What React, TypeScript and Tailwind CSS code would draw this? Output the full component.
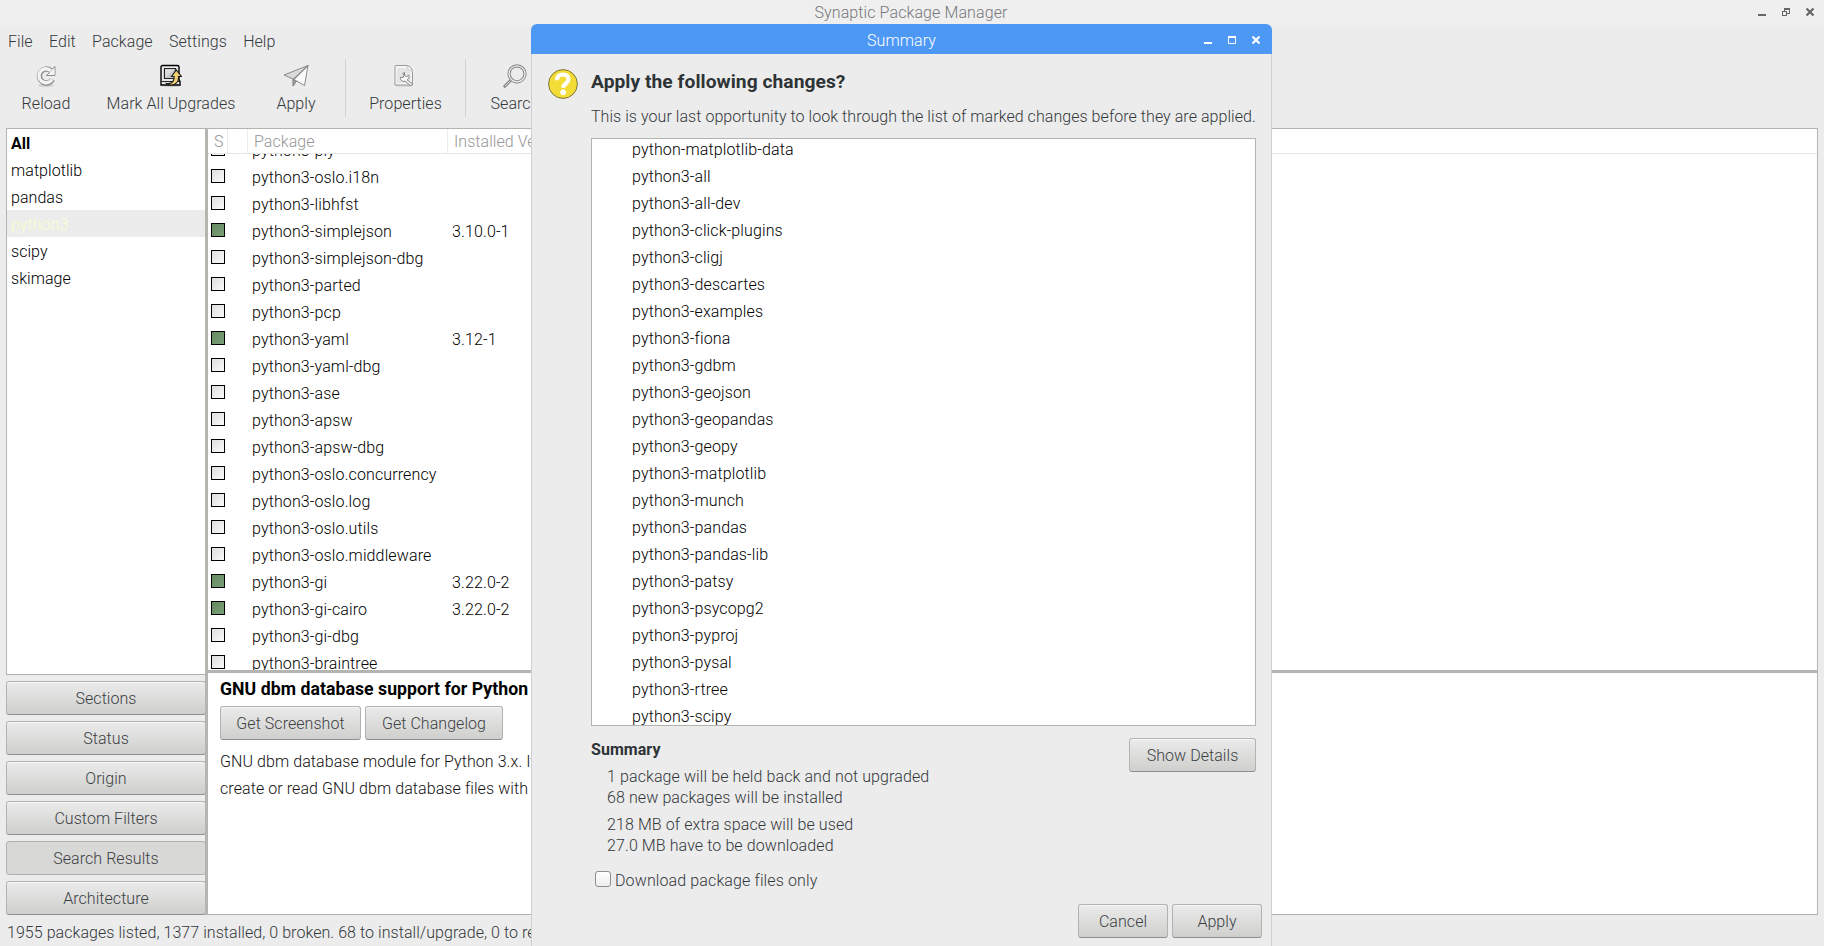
import React from "react";

const sections = ["All", "matplotlib", "pandas", "python3", "scipy", "skimage"];

const packages: { name: string; version?: string }[] = [
  { name: "python3-ply" },
  { name: "python3-oslo.i18n" },
  { name: "python3-libhfst" },
  { name: "python3-simplejson", version: "3.10.0-1" },
  { name: "python3-simplejson-dbg" },
  { name: "python3-parted" },
  { name: "python3-pcp" },
  { name: "python3-yaml", version: "3.12-1" },
  { name: "python3-yaml-dbg" },
  { name: "python3-ase" },
  { name: "python3-apsw" },
  { name: "python3-apsw-dbg" },
  { name: "python3-oslo.concurrency" },
  { name: "python3-oslo.log" },
  { name: "python3-oslo.utils" },
  { name: "python3-oslo.middleware" },
  { name: "python3-gi", version: "3.22.0-2" },
  { name: "python3-gi-cairo", version: "3.22.0-2" },
  { name: "python3-gi-dbg" },
  { name: "python3-braintree" },
];

const marked = [
  "python-matplotlib-data",
  "python3-all",
  "python3-all-dev",
  "python3-click-plugins",
  "python3-cligj",
  "python3-descartes",
  "python3-examples",
  "python3-fiona",
  "python3-gdbm",
  "python3-geojson",
  "python3-geopandas",
  "python3-geopy",
  "python3-matplotlib",
  "python3-munch",
  "python3-pandas",
  "python3-pandas-lib",
  "python3-patsy",
  "python3-psycopg2",
  "python3-pyproj",
  "python3-pysal",
  "python3-rtree",
  "python3-scipy",
];

const filters = ["Sections", "Status", "Origin", "Custom Filters", "Search Results", "Architecture"];

function Button({ children, className = "", pressed = false }: { children: React.ReactNode; className?: string; pressed?: boolean }) {
  const skin = pressed
    ? "border-[#b0b0ae] bg-[#d8d8d7]"
    : "border-[#b2b2b0] border-b-[#8e8e8c] bg-linear-to-b from-[#ebebeb] to-[#cfcfcd] shadow-[inset_0_1px_0_#f6f6f6]";
  return (
    <button className={`flex h-[34px] shrink-0 items-center justify-center rounded-[3px] border pt-0.5 text-[#3c4144] ${skin} ${className}`}>
      {children}
    </button>
  );
}

function ReloadIcon() {
  return (
    <svg width="22" height="24" viewBox="0 0 22 24" fill="none">
      <ellipse cx="11" cy="21.5" rx="8" ry="1.5" fill="#d0d0d0" />
      <path d="M17.500 15.500A7 7 0 1 1 15.800 6.600" stroke="#909090" strokeWidth="5.400" />
      <path d="M11.500 11.500h8.500V2.500l-3 2.700-2.500 3.300z" fill="#f1f1f1" stroke="#909090" />
      <path d="M17 15.300A7 7 0 1 1 16 6.900" stroke="#f3f3f3" strokeWidth="3.400" />
      <path d="M13.600 10.800h5.700V4.600z" fill="#f3f3f3" />
    </svg>
  );
}

function UpgradeIcon() {
  return (
    <svg width="22" height="24" viewBox="0 0 22 24" fill="none">
      <ellipse cx="11" cy="21.8" rx="10" ry="1.5" fill="#cfcfcf" />
      <path d="M2.5 1.5h15a1.5 1.5 0 0 1 1.5 1.5v12.5l1 2v3.5H1v-3.5l0-14.5a1.5 1.5 0 0 1 1.5-1.5z" fill="#e9e9e9" stroke="#000" strokeWidth="1.4" />
      <path d="M4.5 4.5h11v10h-11z" fill="#c5c7cc" stroke="#222" strokeWidth="1.2" />
      <path d="M5.2 13.8V5.2h9z" fill="#dcdde1" />
      <path d="M1.5 17.5h18" stroke="#222" />
      <path d="M6.500 19.500c4 .8 7.600-1.600 7.600-5.500v-1.500h-2.600l4.700-6.500 5.300 6.500H18.500V14c0 4.500-3.500 7-7.500 7-2 0-3.600-.6-4.500-1.500z" fill="#f0cf73" stroke="#1c1c1c" strokeWidth="1.1" />
    </svg>
  );
}

function ApplyIcon() {
  return (
    <svg width="26" height="24" viewBox="0 0 26 24" fill="none" strokeLinejoin="round">
      <path d="M1 11L25 1.500 11 15.500z" fill="#dadada" stroke="#8b8b8b" />
      <path d="M10 15.500v6.500l3.500-5z" fill="#aaa" stroke="#777" />
      <path d="M25 1.500L21.500 21.500 11 15.500z" fill="#fafafa" stroke="#8b8b8b" />
      <path d="M25 1.500L10 15.500" stroke="#777" />
    </svg>
  );
}

function PropertiesIcon() {
  return (
    <svg className="-ml-1" width="20" height="24" viewBox="0 0 20 24" fill="none" strokeLinejoin="round">
      <ellipse cx="10" cy="21.500" rx="9" ry="1.300" fill="#d2d2d2" />
      <path d="M1 2.500a1 1 0 0 1 1-1h11c3 .5 5 3 5.500 6v13.500H1z" fill="#f5f5f5" stroke="#999" />
      <path d="M3 4h10l3.500 4v11H3z" fill="#e4e4e4" />
      <path d="M13 1.500c0 2 .5 4 5.500 6" stroke="#c5c5c5" />
      <path d="M10.500 8.500v3l2 1.200 2.500-1.500c.8 2-.3 4.200-2 4.600l5.500 4.200-1.800 1.800-5.500-4.600c-3 .6-5.200-1-4.700-3.900l2.500.2 1.200-2.500-1.500-1.500z" fill="#f8f8f8" stroke="#858585" />
    </svg>
  );
}

function SearchIcon() {
  return (
    <svg width="24" height="24" viewBox="0 0 24 24" fill="none">
      <path d="M8.500 15.500L1.800 22.200" stroke="#858585" strokeWidth="3" strokeLinecap="round" />
      <path d="M8 16L2 22" stroke="#ddd" strokeWidth="1" />
      <circle cx="14" cy="9.800" r="8" stroke="#858585" strokeWidth="3.200" />
      <circle cx="14" cy="9.800" r="8" stroke="#eee" strokeWidth="1.300" />
    </svg>
  );
}

function Tool({ label, className, children }: { label: string; className: string; children: React.ReactNode }) {
  return (
    <div className={`flex flex-col items-center ${className}`}>
      <div className="flex h-7 items-center">{children}</div>
      <span className="mt-1 leading-5 whitespace-nowrap">{label}</span>
    </div>
  );
}

function MainWindow() {
  return (
    <div className="flex h-full w-full flex-col bg-[#ececec]">
      <div className="flex h-[25px] shrink-0 items-center bg-[#efefef]">
        <div className="w-[72px]" />
        <div className="grow pr-0.5 text-center tracking-[0.1px] text-[#77777c]">Synaptic Package Manager</div>
        <svg width="72" height="25" viewBox="0 0 72 25" fill="none" shapeRendering="crispEdges">
          <path d="M6 14h8v2H6z" fill="#666" />
          <path d="M32.500 8.500h5v5h-5z" stroke="#666" />
          <path d="M32 8h6v2h-6z" fill="#666" />
          <path d="M30.500 11.500h4v4h-4z" stroke="#666" fill="#efefef" />
          <path d="M54.500 8.500l7 7M61.500 8.500l-7 7" stroke="#666" strokeWidth="2.200" shapeRendering="auto" />
        </svg>
      </div>

      <div className="flex h-8 shrink-0 items-center gap-[16.3px] pt-0.5 pl-2 text-[#33383b]">
        <span>File</span>
        <span>Edit</span>
        <span>Package</span>
        <span>Settings</span>
        <span>Help</span>
      </div>

      <div className="flex h-[71px] shrink-0 pt-[5px] text-[#33383b]">
        <Tool label="Reload" className="w-[92px]"><ReloadIcon /></Tool>
        <Tool label="Mark All Upgrades" className="w-[158px]"><UpgradeIcon /></Tool>
        <Tool label="Apply" className="w-[92px]"><ApplyIcon /></Tool>
        <div className="-mt-[3px] ml-[3px] h-[58px] w-px bg-[#d2d2d2]" />
        <Tool label="Properties" className="w-[119px]"><PropertiesIcon /></Tool>
        <div className="-mt-[3px] h-[58px] w-px bg-[#d2d2d2]" />
        <Tool label="Search" className="w-[98px]"><SearchIcon /></Tool>
      </div>

      <div className="flex min-h-0 grow pr-1.5 pl-1.5">
        <div className="flex w-[199px] shrink-0 flex-col">
          <div className="h-[547px] shrink-0 border border-r-0 border-[#b4b4ae] bg-white text-black">
            {sections.map((s) => (
              <div
                key={s}
                className={`flex h-[27px] items-center pt-0.5 pl-1 ${s === "All" ? "font-bold" : ""} ${s === "python3" ? "bg-[#ececec] text-[#f8ffd0]" : ""}`}
              >
                {s}
              </div>
            ))}
          </div>
          <div className="mt-1.5 flex w-[200px] flex-col gap-1.5">
            {filters.map((f) => (
              <Button key={f} pressed={f === "Search Results"}>{f}</Button>
            ))}
          </div>
        </div>
        <div className="h-[787px] w-[3px] shrink-0 bg-[#b4b4b0]" />

        <div className="flex h-[787px] min-w-0 grow flex-col border-t border-r border-b border-[#b4b4ae] bg-white">
          <div className="flex h-[25px] shrink-0 border-b border-[#e6e6e6] text-[#969696]">
            <div className="flex w-5 items-center border-r border-[#ececec] pt-0.5 pl-1.5">S</div>
            <div className="w-5 border-r border-[#ececec]" />
            <div className="flex w-[200px] items-center border-r border-[#ececec] pt-0.5 pl-1.5">Package</div>
            <div className="flex items-center pt-0.5 pl-1.5">Installed Version</div>
          </div>
          <div className="h-[516px] shrink-0 overflow-hidden tracking-[0.12px] text-black">
            <div className="-mt-[18px]">
              {packages.map((p) => (
                <div key={p.name} className="flex h-[27px] pl-[3px]">
                  <span
                    className={`mt-1.5 h-3.5 w-3.5 shrink-0 border border-black ${p.version ? "bg-linear-to-br from-[#66895f] to-[#7a9f78]" : "bg-linear-to-br from-[#dedede] to-[#fafafa]"}`}
                  />
                  <span className="w-[227px] pl-[27px] leading-[29px] whitespace-nowrap">{p.name}</span>
                  <span className="leading-[29px]">{p.version}</span>
                </div>
              ))}
            </div>
          </div>
          <div className="h-[3px] shrink-0 bg-[#b4b4b0]" />
          <div className="flex flex-col pl-3 text-[#111]">
            <div className="mt-0.5 h-[27px] text-[17.65px] leading-[28px] font-bold text-black">GNU dbm database support for Python 3.x</div>
            <div className="mt-1 flex gap-1">
              <Button className="w-[141px]">Get Screenshot</Button>
              <Button className="w-[138px]">Get Changelog</Button>
            </div>
            <div className="mt-2 leading-[27px] tracking-[0.08px] whitespace-pre">
              {"GNU dbm database module for Python 3.x. It allows to\ncreate or read GNU dbm database files with Python."}
            </div>
          </div>
        </div>
      </div>

      <div className="flex h-[31px] shrink-0 items-center pt-[5px] pl-[7px] text-[#33383b]">
        1955 packages listed, 1377 installed, 0 broken. 68 to install/upgrade, 0 to remove
      </div>
    </div>
  );
}

function SummaryDialog() {
  return (
    <div className="absolute top-6 left-[531px] flex h-[922px] w-[741px] flex-col overflow-hidden rounded-t-md text-[#33383b]">
      <div className="flex h-[30px] shrink-0 items-center bg-[#4d98f5] text-white">
        <div className="w-[72px]" />
        <div className="grow pt-[3px] text-center tracking-[0.1px]">Summary</div>
        <svg width="72" height="30" viewBox="0 0 72 30" fill="none">
          <path d="M4 18h8v2H4z" fill="#fff" />
          <path d="M28.500 13v6.500h7V13" stroke="#fff" />
          <path d="M28 12h8v2h-8z" fill="#fff" />
          <path d="M52.500 12.500l7 7M59.500 12.500l-7 7" stroke="#fff" strokeWidth="2.200" />
        </svg>
      </div>
      <div className="flex min-h-0 grow flex-col border-x border-[#cfcfcf] bg-[#ececec] pr-[15px] pl-4">
        <div className="flex">
          <svg className="mt-[15px] shrink-0" width="30" height="30" viewBox="0 0 30 30" fill="none">
            <circle cx="15" cy="15" r="14.400" fill="#f3dc35" stroke="#7d7540" />
            <path d="M9 11.200C9 7 11.400 5.500 14.800 5.500c3.800 0 5.700 1.900 5.700 4.700 0 4.300-5.300 4.300-5.300 8.600" stroke="#fff" strokeWidth="4.200" />
            <circle cx="15.200" cy="23.300" r="2.900" fill="#fff" />
          </svg>
          <div className="ml-[13px] flex w-[665px] flex-col">
            <div className="mt-[14px] text-[19.2px] leading-7 font-bold text-[#2e3436]">Apply the following changes?</div>
            <div className="mt-[9px] leading-6 whitespace-nowrap">
              This is your last opportunity to look through the list of marked changes before they are applied.
            </div>
            <div className="mt-[9px] h-[588px] overflow-hidden border border-[#b4b4ae] bg-white text-black">
              <div className="-mt-[3px] pl-10 tracking-[0.12px]">
                {marked.map((m) => (
                  <div key={m} className="flex h-[27px] items-center">{m}</div>
                ))}
              </div>
            </div>
            <div className="mt-3 flex items-start justify-between">
              <div>
                <div className="font-bold text-[#2e3436]">Summary</div>
                <div className="mt-1 pl-4 leading-[21px] tracking-[0.1px]">
                  <div>1 package will be held back and not upgraded</div>
                  <div>68 new packages will be installed</div>
                  <div className="mt-1.5">218 MB of extra space will be used</div>
                  <div>27.0 MB have to be downloaded</div>
                </div>
              </div>
              <Button className="w-[127px]">Show Details</Button>
            </div>
            <label className="mt-3 flex h-6 items-center gap-1 pl-1 tracking-[0.12px]">
              <span className="-mt-0.5 h-4 w-4 rounded-[3px] border border-[#8e8e8c] bg-linear-to-b from-white to-[#ededed]" />
              <span className="pt-px">Download package files only</span>
            </label>
          </div>
        </div>
        <div className="mt-3 -mr-[6px] flex justify-end gap-1">
          <Button className="w-[90px]">Cancel</Button>
          <Button className="w-[90px]">Apply</Button>
        </div>
      </div>
    </div>
  );
}

export default function App() {
  return (
    <div className="relative h-[946px] w-[1824px] overflow-hidden font-['Roboto',sans-serif] text-[16px] leading-6 font-light tracking-[0.055px]">
      <MainWindow />
      <SummaryDialog />
    </div>
  );
}
